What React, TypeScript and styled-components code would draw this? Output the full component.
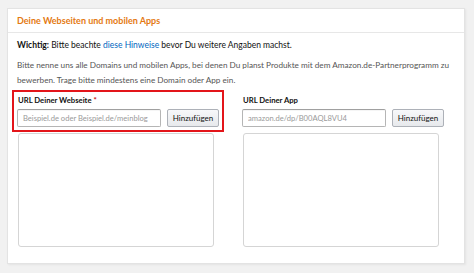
import styled, { createGlobalStyle } from "styled-components";

const GlobalStyle = createGlobalStyle`
  html, body {
    margin: 0;
    padding: 0;
    background: #f1f1f1;
  }
  body {
    font-family: Lato, "Liberation Sans", sans-serif;
    color: #111;
  }
`;

const Page = styled.div`
  width: 474px;
  height: 273px;
  padding: 8px 0 0 7px;
  box-sizing: border-box;
`;

const Card = styled.section`
  width: 458px;
  height: 256px;
  box-sizing: border-box;
  background: #fff;
  border: 1px solid #e3e3e3;
  box-shadow: 1px 1px 2px rgba(0, 0, 0, 0.06);
`;

const CardHeader = styled.header`
  height: 24px;
  box-sizing: border-box;
  border-bottom: 1px solid #e7e7e7;
  padding: 0 0 0 9px;
  display: flex;
  align-items: center;
  font-size: 9px;
  font-weight: 700;
  color: #e47911;
`;

const CardBody = styled.div`
  padding: 7px 0 0 9px;
`;

const Note = styled.p`
  margin: 0 0 7px;
  font-size: 8.5px;
  line-height: 11px;
  color: #111;
  white-space: nowrap;

  b {
    font-weight: 700;
  }
`;

const Link = styled.a`
  color: #0066c0;
  text-decoration: none;
`;

const Intro = styled.p`
  margin: 0;
  font-size: 8.2px;
  line-height: 15px;
  color: #555;
  white-space: nowrap;
`;

const Columns = styled.div`
  display: grid;
  grid-template-columns: 225px 225px;
  margin-top: 7px;
`;

const Column = styled.div`
  width: 202px;
  display: flex;
  flex-direction: column;
`;

const FieldGroup = styled.div<{ $highlighted?: boolean }>`
  display: flex;
  flex-direction: column;
  ${({ $highlighted }) =>
    $highlighted ? "outline: 2px solid #e3151a; outline-offset: 3px;" : ""}
`;

const Label = styled.label`
  font-size: 7.7px;
  font-weight: 700;
  line-height: 11px;
  color: #111;
  padding-left: 1px;
  margin-bottom: 3px;
`;

const Required = styled.span`
  color: #c40000;
`;

const InputRow = styled.div`
  display: flex;
  gap: 6px;
`;

const TextInput = styled.input`
  width: 144px;
  height: 18px;
  box-sizing: border-box;
  border: 1px solid #b5b5b5;
  border-top-color: #a0a0a0;
  border-radius: 2px;
  padding: 0 5px;
  font-family: inherit;
  font-size: 7.6px;
  color: #111;
  box-shadow: inset 0 1px 0 rgba(0, 0, 0, 0.04);

  &::placeholder {
    color: #9a9a9a;
  }
`;

const AddButton = styled.button`
  width: 52px;
  height: 18px;
  box-sizing: border-box;
  border: 1px solid #adb1b8;
  border-radius: 2px;
  background: linear-gradient(#f7f8fa, #e7e9ec);
  font-family: inherit;
  font-size: 8px;
  color: #111;
  padding: 0;
`;

const ListBox = styled.textarea`
  margin-top: 6px;
  margin-left: 1px;
  width: 196px;
  height: 114px;
  box-sizing: border-box;
  border: 1px solid #d5d5d5;
  border-radius: 3px;
  resize: none;
  background: #fff;
`;

const fields = [
  {
    label: "URL Deiner Webseite",
    required: true,
    placeholder: "Beispiel.de oder Beispiel.de/meinblog",
    highlighted: true,
  },
  {
    label: "URL Deiner App",
    required: false,
    placeholder: "amazon.de/dp/B00AQL8VU4",
    highlighted: false,
  },
];

export default function App() {
  return (
    <>
      <GlobalStyle />
      <Page>
        <Card>
          <CardHeader>Deine Webseiten und mobilen Apps</CardHeader>
          <CardBody>
            <Note>
              <b>Wichtig:</b> Bitte beachte <Link href="#">diese Hinweise</Link> bevor Du
              weitere Angaben machst.
            </Note>
            <Intro>
              Bitte nenne uns alle Domains und mobilen Apps, bei denen Du planst Produkte mit dem
              Amazon.de-Partnerprogramm zu
              <br />
              bewerben. Trage bitte mindestens eine Domain oder App ein.
            </Intro>
            <Columns>
              {fields.map((f) => (
                <Column key={f.label}>
                  <FieldGroup $highlighted={f.highlighted}>
                    <Label>
                      {f.label} {f.required && <Required>*</Required>}
                    </Label>
                    <InputRow>
                      <TextInput placeholder={f.placeholder} />
                      <AddButton>Hinzufügen</AddButton>
                    </InputRow>
                  </FieldGroup>
                  <ListBox />
                </Column>
              ))}
            </Columns>
          </CardBody>
        </Card>
      </Page>
    </>
  );
}
